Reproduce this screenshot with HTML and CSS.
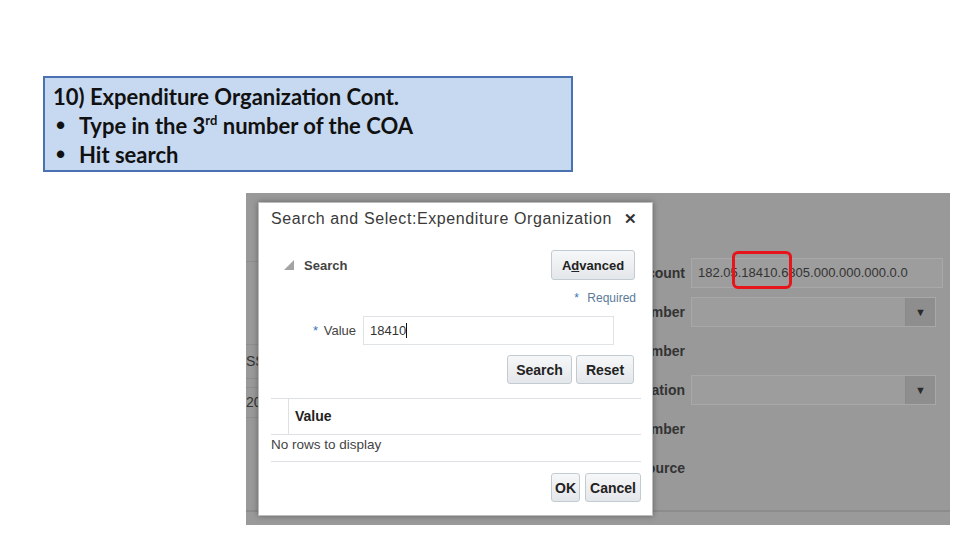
FILE: index.html
```html
<!DOCTYPE html>
<html>
<head>
  <title>Expenditure Organization Cont.</title>
  <link rel="stylesheet" href="styles.css">
</head>
<body>
  <div class="callout">
    <p class="callout-title">10) Expenditure Organization Cont.</p>
    <div class="bullet"><span class="dot">&bull;</span><span>Type in the 3<sup>rd</sup> number of the COA</span></div>
    <div class="bullet"><span class="dot">&bull;</span><span>Hit search</span></div>
  </div>

  <div class="shot">
    <div class="shot-main">
      <div class="bg-left">
        <div class="bg-line bg-line-top"></div>
        <div class="bg-row">SS</div>
        <div class="bg-row bg-row-gap">20</div>
      </div>

      <div class="bg-form">
        <div class="bg-field-row">
          <span class="bg-label">Account</span>
          <div class="bg-input bg-input-wide">182.05.18410.6805.000.000.000.0.0</div>
        </div>
        <div class="bg-field-row">
          <span class="bg-label">Project Number</span>
          <div class="bg-input"><span class="bg-drop">&#9660;</span></div>
        </div>
        <div class="bg-field-row">
          <span class="bg-label">Task Number</span>
        </div>
        <div class="bg-field-row">
          <span class="bg-label">Organization</span>
          <div class="bg-input"><span class="bg-drop">&#9660;</span></div>
        </div>
        <div class="bg-field-row">
          <span class="bg-label">Award Number</span>
        </div>
        <div class="bg-field-row">
          <span class="bg-label">Funding Source</span>
        </div>
      </div>
    </div>
    <div class="shot-foot"></div>

    <div class="highlight"></div>

    <div class="dialog">
      <div class="dialog-title">
        <span>Search and Select:Expenditure Organization</span>
        <span class="close">&#10005;</span>
      </div>

      <div class="search-head">
        <span class="disclosure"></span>
        <span class="search-label">Search</span>
        <button class="btn btn-adv">A<u>d</u>vanced</button>
      </div>

      <div class="required"><span class="star">*</span> Required</div>

      <div class="value-row">
        <label class="value-label"><span class="star">*</span> Value</label>
        <div class="value-input">18410<span class="caret"></span></div>
      </div>

      <div class="btn-row">
        <button class="btn btn-search">Search</button>
        <button class="btn btn-reset">Reset</button>
      </div>

      <div class="results">
        <div class="results-head">
          <span class="results-blank"></span>
          <span class="results-col">Value</span>
        </div>
        <div class="results-empty">No rows to display</div>
      </div>

      <div class="btn-row btn-row-foot">
        <button class="btn btn-ok">OK</button>
        <button class="btn btn-cancel">Cancel</button>
      </div>
    </div>
  </div>
</body>
</html>
```

FILE: styles.css
```css
body {
  margin: 0;
  padding: 0;
  width: 960px;
  height: 540px;
  background: white;
  font-family: 'Liberation Sans', Arial, sans-serif;
  overflow: hidden;
}

/* note box */
.callout {
  box-sizing: border-box;
  width: 530px;
  height: 96px;
  margin: 76px 0 0 43px;
  padding: 4px 8px 0 8px;
  background: #c6d9f1;
  border: 2px solid #4a72b0;
  font-family: 'Lato', 'Liberation Sans', sans-serif;
  font-weight: bold;
  font-size: 22px;
  line-height: 29px;
  color: #111;
}

.callout-title {
  margin: 0;
}

.bullet {
  display: flex;
}

.dot {
  width: 26px;
  padding-left: 3px;
  box-sizing: border-box;
  font-family: 'Liberation Sans', sans-serif;
  font-size: 26px;
}

.bullet sup {
  font-size: 13px;
  line-height: 0;
  vertical-align: 9px;
}

/* screenshot */
.shot {
  position: relative;
  width: 704px;
  height: 332px;
  margin: 21px 0 0 246px;
  background: #999;
  display: flex;
  flex-direction: column;
  overflow: hidden;
}

.shot-main {
  height: 317px;
  display: flex;
}

.shot-foot {
  flex: 1;
  border-top: 2px solid #8c8c8c;
  background: #9a9a9a;
}

.bg-left {
  width: 60px;
  font-size: 14px;
  color: #333;
}

.bg-line-top {
  height: 68px;
  border-bottom: 1px solid #8e8e8e;
}

.bg-row {
  margin-top: 82px;
  height: 33px;
  line-height: 33px;
  border-top: 1px solid #8e8e8e;
  border-bottom: 1px solid #8e8e8e;
}

.bg-row-gap {
  margin-top: 8px;
  height: 29px;
  line-height: 29px;
}

.bg-form {
  margin-left: 240px;
  padding-top: 60px;
}

.bg-field-row {
  height: 39px;
  display: flex;
  align-items: center;
  gap: 6px;
}

.bg-label {
  width: 139px;
  text-align: right;
  font-size: 14px;
  font-weight: bold;
  color: #333;
  white-space: nowrap;
}

.bg-input {
  box-sizing: border-box;
  width: 245px;
  height: 30px;
  background: #9d9d9d;
  border: 1px solid #a8a8a8;
  display: flex;
  justify-content: flex-end;
}

.bg-input-wide {
  width: 252px;
  justify-content: flex-start;
  padding-left: 6px;
  line-height: 28px;
  font-size: 13px;
  color: #333;
}

.bg-drop {
  width: 29px;
  background: #8e8e8e;
  border-left: 1px solid #8a8a8a;
  font-size: 11px;
  color: #2a2a2a;
  text-align: center;
  line-height: 28px;
}

.highlight {
  position: absolute;
  left: 486px;
  top: 58px;
  width: 60px;
  height: 38px;
  box-sizing: border-box;
  border: 3px solid #e8141b;
  border-radius: 6px;
}

/* dialog */
.dialog {
  position: absolute;
  left: 12px;
  top: 9px;
  width: 395px;
  height: 314px;
  box-sizing: border-box;
  padding: 0 11px 0 12px;
  background: white;
  border: 1px solid #bdbdbd;
  box-shadow: 0 0 6px rgba(0,0,0,0.35);
  color: #333;
}

.dialog-title {
  height: 32px;
  display: flex;
  align-items: center;
  justify-content: space-between;
  padding-right: 4px;
  font-size: 16px;
  letter-spacing: 0.6px;
  color: #3a3a3a;
}

.close {
  font-size: 15px;
  font-weight: bold;
  letter-spacing: 0;
  color: #333;
}

.search-head {
  margin-top: 15px;
  height: 30px;
  display: flex;
  align-items: center;
  padding-right: 6px;
}

.disclosure {
  width: 0;
  height: 0;
  margin-left: 13px;
  border-left: 10px solid transparent;
  border-bottom: 10px solid #a4a4a4;
}

.search-label {
  margin-left: 10px;
  font-size: 13px;
  font-weight: bold;
  color: #444;
  flex: 1;
}

.btn {
  height: 29px;
  padding: 0 9px;
  border: 1px solid #c3cbd2;
  border-radius: 3px;
  background: linear-gradient(#f6f7f8, #e4e7ea);
  font-family: 'Liberation Sans', Arial, sans-serif;
  font-size: 14px;
  font-weight: bold;
  color: #222;
}

.btn-adv {
  height: 30px;
  width: 84px;
  padding: 0;
  font-size: 13px;
}

.required {
  margin-top: 11px;
  padding-right: 5px;
  text-align: right;
  font-size: 12px;
  color: #5b7a98;
}

.star {
  color: #3a76b5;
  margin-right: 5px;
}

.value-row {
  margin-top: 11px;
  display: flex;
  align-items: center;
  gap: 7px;
}

.value-label {
  width: 85px;
  text-align: right;
  font-size: 13px;
  color: #444;
}

.value-label .star {
  margin-right: 2px;
}

.value-input {
  box-sizing: border-box;
  width: 251px;
  height: 29px;
  padding-left: 6px;
  border: 1px solid #dfe3e6;
  font-size: 13px;
  line-height: 27px;
  color: #333;
  display: flex;
  align-items: center;
}

.caret {
  width: 1px;
  height: 15px;
  background: #111;
}

.btn-row {
  margin-top: 10px;
  display: flex;
  justify-content: flex-end;
  gap: 4px;
  padding-right: 7px;
}

.btn-search {
  width: 65px;
  padding: 0;
}

.btn-reset {
  width: 58px;
  padding: 0;
}

.results {
  margin-top: 14px;
  border-top: 1px solid #dde1e4;
  border-bottom: 1px solid #dde1e4;
}

.results-head {
  height: 35px;
  display: flex;
  border-bottom: 1px solid #dde1e4;
}

.results-blank {
  width: 17px;
  border-right: 1px solid #dde1e4;
}

.results-col {
  padding-left: 6px;
  line-height: 35px;
  font-size: 14px;
  font-weight: bold;
  color: #222;
}

.results-empty {
  height: 26px;
  line-height: 20px;
  font-size: 13.5px;
  color: #444;
}

.btn-row-foot {
  margin-top: 11px;
  padding-right: 0;
  gap: 5px;
}

.btn-ok {
  width: 29px;
  padding: 0;
}

.btn-cancel {
  width: 56px;
  padding: 0;
}
```
